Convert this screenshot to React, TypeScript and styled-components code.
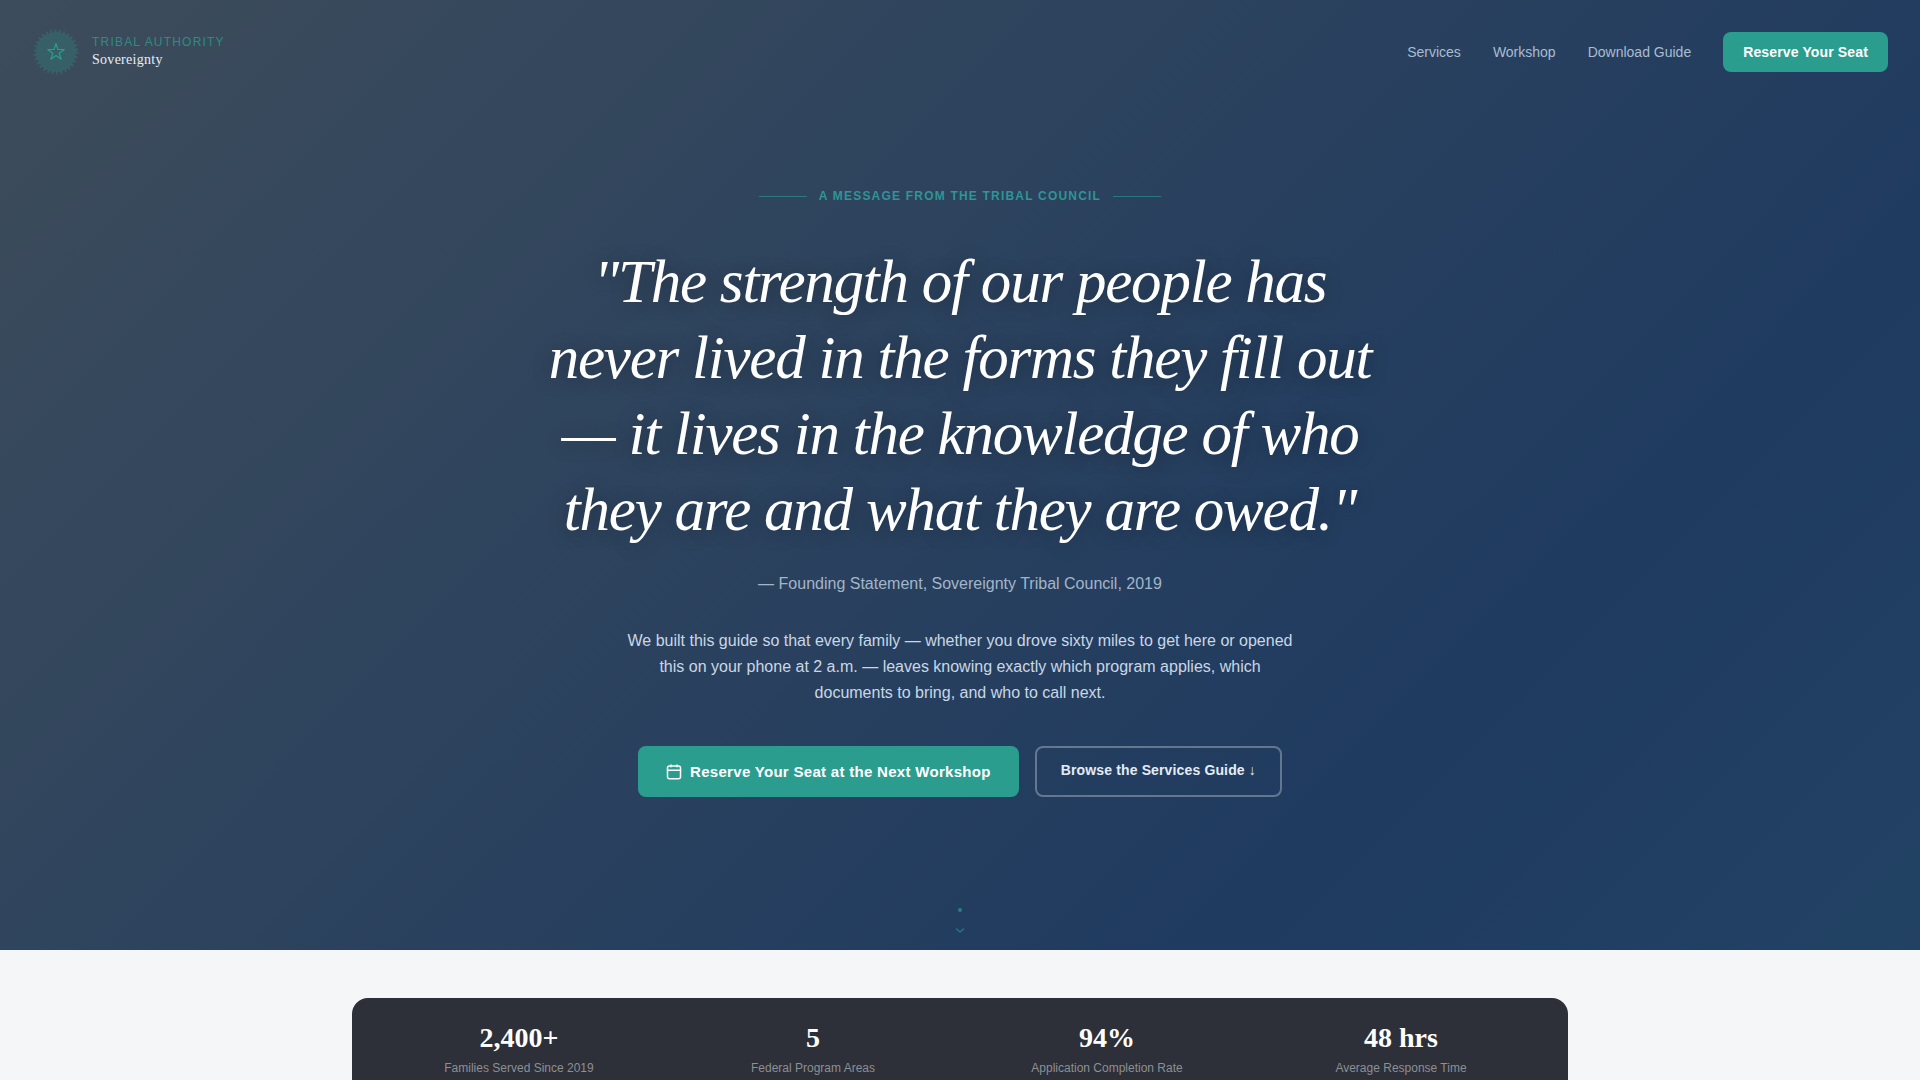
import React from "react";
import styled, { createGlobalStyle, css } from "styled-components";

const sans = `"Liberation Sans", Arial, Helvetica, sans-serif`;
const serif = `"Liberation Serif", "Times New Roman", Times, serif`;
const teal = "#2a9d8f";

const GlobalStyle = createGlobalStyle`
  *, *::before, *::after { box-sizing: border-box; }
  body {
    margin: 0;
    background: #f4f6f7;
    color: #2d3039;
    font-family: ${sans};
    font-size: 16px;
  }
  html { scrollbar-width: none; }
`;

const Hero = styled.section`
  display: flex;
  flex-direction: column;
  min-height: 88vh;
  background: linear-gradient(135deg, #3d4c5b 0%, #1f3b60 75%, #224264 100%);
`;

const Header = styled.header`
  display: flex;
  align-items: center;
  justify-content: space-between;
  padding: 28px 32px;
`;

const Brand = styled.a`
  display: flex;
  align-items: center;
  gap: 12px;
  text-decoration: none;
`;

const BrandText = styled.span`
  display: flex;
  flex-direction: column;
  padding-bottom: 4px;
`;

const BrandOver = styled.span`
  font-size: 12px;
  line-height: 18px;
  letter-spacing: 0.1em;
  text-transform: uppercase;
  color: ${teal};
  opacity: 0.8;
`;

const BrandName = styled.span`
  font-family: ${serif};
  font-size: 14px;
  line-height: 17px;
  letter-spacing: 0.02em;
  color: #e8eef5;
`;

const Nav = styled.nav`
  display: flex;
  align-items: center;
  gap: 32px;
`;

const NavLink = styled.a`
  font-size: 14px;
  line-height: 20px;
  color: #a9bcd0;
  text-decoration: none;
`;

const Button = styled.button<{ $kind: "nav" | "primary" | "outline" }>`
  display: inline-flex;
  align-items: center;
  justify-content: center;
  gap: 8px;
  border: 0;
  border-radius: 8px;
  font-family: ${sans};
  font-weight: 700;
  letter-spacing: 0.01em;
  color: #ffffff;
  background: ${teal};
  cursor: pointer;
  ${({ $kind }) =>
    $kind === "nav" &&
    css`
      padding: 10px 20px;
      font-size: 14px;
      line-height: 20px;
    `}
  ${({ $kind }) =>
    $kind === "primary" &&
    css`
      padding: 14px 28px;
      font-size: 15px;
      line-height: 23px;
      letter-spacing: 0.02em;
    `}
  ${({ $kind }) =>
    $kind === "outline" &&
    css`
      padding: 12px 24px 14px;
      font-size: 14px;
      line-height: 21px;
      color: #e3ecf6;
      background: transparent;
      border: 2px solid rgba(255, 255, 255, 0.3);
    `}
`;

const HeroBody = styled.div`
  flex: 1;
  display: flex;
  flex-direction: column;
  align-items: center;
  padding: 82px 32px 0;
  text-align: center;
`;

const Eyebrow = styled.p`
  display: flex;
  align-items: center;
  gap: 12px;
  margin: 0 0 38px;
  font-size: 12px;
  line-height: 20px;
  font-weight: 700;
  letter-spacing: 0.1em;
  text-transform: uppercase;
  color: #2f9595;
  &::before, &::after {
    content: "";
    width: 48px;
    height: 1px;
    background: ${teal};
    opacity: 0.6;
  }
`;

const Quote = styled.h1`
  max-width: 860px;
  margin: 0 0 24px;
  font-family: ${serif};
  font-size: 61px;
  line-height: 76px;
  font-weight: 400;
  font-style: italic;
  letter-spacing: -0.02em;
  color: #ffffff;
  text-shadow: 0 2px 20px rgba(0, 0, 0, 0.3);
`;

const Cite = styled.p`
  margin: 0 0 32px;
  font-size: 16px;
  line-height: 24px;
  color: #a3b5c9;
`;

const Lead = styled.p`
  max-width: 680px;
  margin: 0 0 40px;
  font-size: 16px;
  line-height: 26px;
  color: #c9d7e6;
`;

const Actions = styled.div`
  display: flex;
  flex-wrap: wrap;
  justify-content: center;
  gap: 16px;
`;

const ScrollCue = styled.div`
  display: flex;
  justify-content: center;
  padding-bottom: 16px;
`;

const StatsSection = styled.section`
  max-width: 1280px;
  margin: 0 auto;
  padding: 48px 32px;
`;

const StatsCard = styled.dl`
  display: grid;
  grid-template-columns: repeat(4, 1fr);
  gap: 24px;
  margin: 0;
  padding: 24px 32px;
  border-radius: 16px;
  background: #2d3039;
`;

const Stat = styled.div`
  display: flex;
  flex-direction: column-reverse;
  justify-content: flex-end;
  gap: 4px;
  text-align: center;
`;

const StatValue = styled.dd`
  margin: 0;
  font-family: ${serif};
  font-size: 28px;
  line-height: 32px;
  font-weight: 700;
  color: #ffffff;
`;

const StatLabel = styled.dt`
  font-size: 12px;
  line-height: 20px;
  color: #8c8f94;
`;

const stats = [
  { value: "2,400+", label: "Families Served Since 2019" },
  { value: "5", label: "Federal Program Areas" },
  { value: "94%", label: "Application Completion Rate" },
  { value: "48 hrs", label: "Average Response Time" },
];

function Seal() {
  return (
    <svg width="48" height="48" viewBox="0 0 48 48" fill="none" aria-hidden="true">
      <circle cx="24" cy="24" r="20" fill={teal} fillOpacity="0.25" />
      <circle cx="24" cy="24" r="21" stroke={teal} strokeOpacity="0.25" strokeWidth="3" strokeDasharray="2 2.4" />
      <path
        d="M24 15.500l1.950 6h6.300l-5.100 3.700 1.950 6-5.100-3.700-5.100 3.700 1.950-6-5.100-3.700h6.300z"
        stroke={teal}
        strokeWidth="1.200"
        strokeLinejoin="round"
      />
    </svg>
  );
}

function CalendarIcon() {
  return (
    <svg width="16" height="16" viewBox="0 0 16 16" fill="none" stroke="currentColor" strokeWidth="1.5" strokeLinecap="round" aria-hidden="true">
      <rect x="1.500" y="2" width="13" height="12.800" rx="2" />
      <path d="M1.500 6.300h13M5 1v1.800M11 1v1.800" />
    </svg>
  );
}

export default function App() {
  return (
    <>
      <GlobalStyle />
      <Hero>
        <Header>
          <Brand href="#">
            <Seal />
            <BrandText>
              <BrandOver>Tribal Authority</BrandOver>
              <BrandName>Sovereignty</BrandName>
            </BrandText>
          </Brand>
          <Nav>
            <NavLink href="#services">Services</NavLink>
            <NavLink href="#workshop">Workshop</NavLink>
            <NavLink href="#guide">Download Guide</NavLink>
            <Button type="button" $kind="nav">Reserve Your Seat</Button>
          </Nav>
        </Header>
        <HeroBody>
          <Eyebrow>A Message from the Tribal Council</Eyebrow>
          <Quote>
            "The strength of our people has never lived in the forms they fill out — it lives in the
            knowledge of who they are and what they are owed."
          </Quote>
          <Cite>— Founding Statement, Sovereignty Tribal Council, 2019</Cite>
          <Lead>
            We built this guide so that every family — whether you drove sixty miles to get here or
            opened this on your phone at 2 a.m. — leaves knowing exactly which program applies, which
            documents to bring, and who to call next.
          </Lead>
          <Actions>
            <Button type="button" $kind="primary">
              <CalendarIcon />
              Reserve Your Seat at the Next Workshop
            </Button>
            <Button type="button" $kind="outline">Browse the Services Guide ↓</Button>
          </Actions>
        </HeroBody>
        <ScrollCue>
          <svg width="20" height="32" viewBox="0 0 20 32" fill="none" aria-hidden="true">
            <circle cx="10" cy="8" r="2" fill={teal} fillOpacity="0.7" />
            <path d="M6.500 27l3.500 3 3.500-3" stroke={teal} strokeOpacity="0.6" strokeWidth="1.500" strokeLinecap="round" strokeLinejoin="round" />
          </svg>
        </ScrollCue>
      </Hero>
      <StatsSection id="services">
        <StatsCard>
          {stats.map((s) => (
            <Stat key={s.label}>
              <StatLabel>{s.label}</StatLabel>
              <StatValue>{s.value}</StatValue>
            </Stat>
          ))}
        </StatsCard>
      </StatsSection>
    </>
  );
}
